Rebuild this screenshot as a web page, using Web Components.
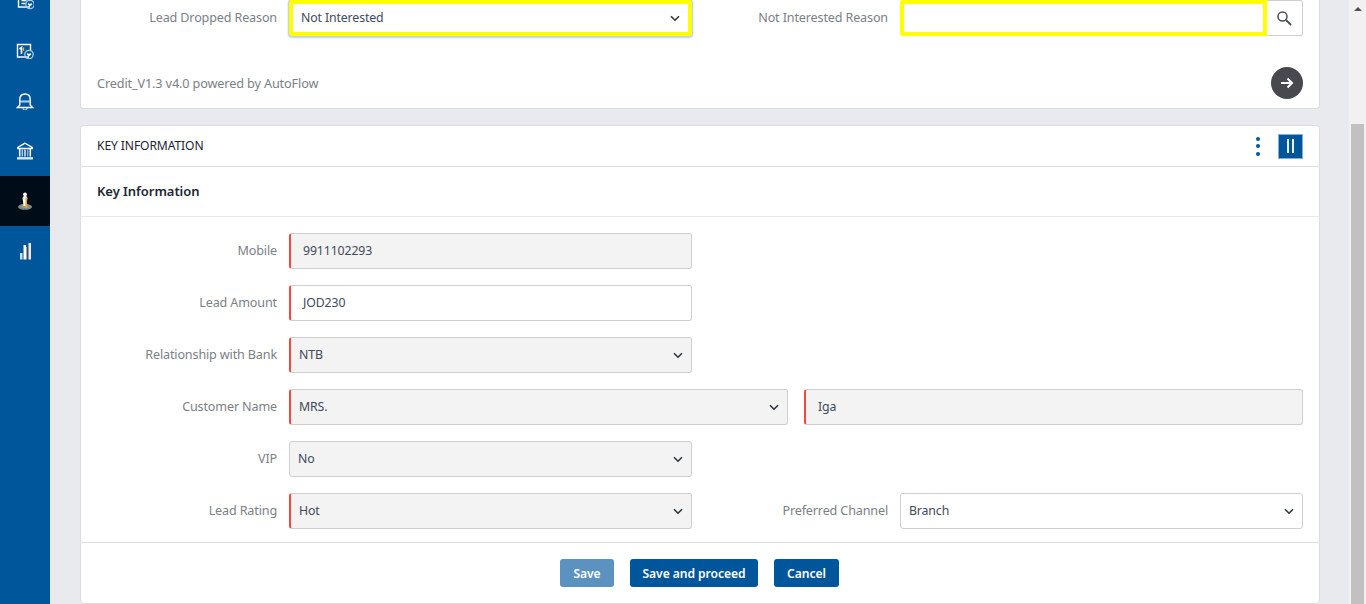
<!DOCTYPE html>
<html lang="en"><head><meta charset="utf-8"><title>Key Information</title>
<style>
html,body{margin:0;padding:0;height:604px;overflow:hidden;background:#e9eaee}
body{font:12.6px "Noto Sans","Liberation Sans",sans-serif;color:#3f4a5a}
</style></head><body>
<x-shell>
<x-sidebar slot="side"></x-sidebar>
<x-card flush>
  <x-grid>
    <x-field label="Lead Dropped Reason" kind="select" value="Not Interested" highlight></x-field>
    <x-field label="Not Interested Reason" kind="lookup" highlight></x-field>
  </x-grid>
  <x-powered>Credit_V1.3 v4.0 powered by AutoFlow</x-powered>
</x-card>
<x-card title="KEY INFORMATION" heading="Key Information">
  <x-grid>
    <x-field label="Mobile" value="9911102293" kind="input" disabled required></x-field><span></span>
    <x-field label="Lead Amount" value="JOD230" kind="input" required></x-field><span></span>
    <x-field label="Relationship with Bank" value="NTB" kind="select" disabled required></x-field><span></span>
    <x-name-field label="Customer Name" title-value="MRS." name-value="Iga"></x-name-field>
    <x-field label="VIP" value="No" kind="select" disabled></x-field><span></span>
    <x-field label="Lead Rating" value="Hot" kind="select" disabled required></x-field>
    <x-field label="Preferred Channel" value="Branch" kind="select"></x-field>
  </x-grid>
  <x-actions slot="footer"></x-actions>
</x-card>
</x-shell>
<script>
const CHEV='<svg width="10" height="7" viewBox="0 0 10 7" fill="none" stroke="#2f3640" stroke-width="1.6"><path d="M1 1.2l4 4 4-4"/></svg>';
function def(name,css,html,init){
  customElements.define(name,class extends HTMLElement{
    connectedCallback(){
      if(this.shadowRoot)return;
      const r=this.attachShadow({mode:'open'});
      r.innerHTML='<style>'+css+'</style>'+(typeof html==='function'?html(this):html);
      if(init)init(this,r);
    }
  });
}
def('x-shell',`:host{display:flex;height:604px;overflow:hidden}
.main{flex:1;min-width:0;display:flex;flex-direction:column;gap:16px;padding:0 29px 0 30px;height:604px;box-sizing:border-box}
.bar{width:17px;background:#f1f1f1;display:flex;flex-direction:column;align-items:center;flex:none}
.up{width:0;height:0;border:4px solid transparent;border-top:0;border-bottom:4px solid #505050;margin-top:7px;margin-left:1px}
.thumb{margin-top:113px;width:13px;height:480px;background:#c1c1c1;flex:none}`,
`<slot name="side"></slot><div class="main"><slot></slot></div><div class="bar"><div class="up"></div><div class="thumb"></div></div>`);

const W='#fff', L='#a9cbea';
const cal=(one)=>`<path d="M13 14H1.5V1.5H14.5V7"/>`+one+`<circle cx="13" cy="11.5" r="4.2" stroke="${L}" stroke-width="1.3"/><path d="M11.2 10.6l1.8 1.8 1.8-1.8" stroke-width="1.5"/>`;
const icons=[
`<svg width="18" height="20" viewBox="-1 -2 18 20" fill="none" stroke="${W}" stroke-width="1.4">${cal('<path d="M4.5 4.5h6.5M4.5 7.5h5M4.5 10.5h4" stroke-width="1.4"/>')}</svg>`,
`<svg width="18" height="16" viewBox="0 0 18 16" fill="none" stroke="${W}" stroke-width="1.4">${cal('<path d="M3.5 6L5.500 4.500V11" stroke-width="1.6"/><path d="M7.5 4.500v3.500" stroke="#f2b24a" stroke-width="1.4"/>')}</svg>`,
`<svg width="18" height="18" viewBox="0 -1 18 18" fill="none" stroke="${W}" stroke-width="1.4"><path d="M3.800 12V6.500C3.800 3 6 1 9 1s5.200 2 5.200 5.500V12l2.300 2.500H1.500z"/><path d="M4 8.500h10" stroke="${L}" stroke-width="2.200"/><path d="M7 15a2 2 0 0 0 4 0" stroke="${L}" stroke-width="1.200"/></svg>`,
`<svg width="18" height="18" viewBox="0 0 18 18" fill="none" stroke="${W}" stroke-width="1.4"><path d="M9 1.200L1.800 5.300v1.200h14.400V5.300z"/><path d="M3.700 7v7.500M14.300 7v7.500" stroke-width="1.500"/><path d="M6.300 7.500v7" stroke="${L}" stroke-width="1.500"/><path d="M9 7.500v7" stroke="#e9e2f0" stroke-width="1.500"/><path d="M11.700 7.500v7" stroke="#8fa8e0" stroke-width="1.500"/><path d="M1 16.300h16" stroke="#dbe9f5" stroke-width="2.400"/></svg>`,
`<svg width="16" height="18" viewBox="0 0 16 18"><ellipse cx="8" cy="14.800" rx="7" ry="3" fill="#7d8a8a"/><path d="M2.500 14.500h2M11.500 15.500h2" stroke="#6f93b5" stroke-width="1.200"/><ellipse cx="8" cy="14.600" rx="4" ry="1.400" fill="#b79a55"/><path d="M7 3.500h2l1.500 2.500-.5 3-.5 5h-3l-.5-5-.5-3z" fill="#fff"/><rect x="8.400" y="5.500" width="1.500" height="10.500" fill="#f0a21c"/><circle cx="8" cy="2.300" r="1.900" fill="#fff"/></svg>`,
`<svg width="14" height="18" viewBox="0 0 14 18"><rect x="2" y="11" width="2.500" height="6.500" fill="#bfe0f5"/><rect x="5.500" y="3" width="2.500" height="14.500" fill="#fff"/><rect x="8" y="5" width="1" height="12.500" fill="#d9954d"/><rect x="10.500" y="1" width="2.500" height="16.500" fill="#efe7f5"/></svg>`];
def('x-sidebar',`:host{display:block;width:50px;flex:none;background:#00569b;height:604px;overflow:hidden}
.list{margin-top:-24px;display:flex;flex-direction:column}
.i{height:50px;display:flex;align-items:center;justify-content:center}
.a{background:#000d18}`,
()=>'<div class="list">'+icons.map((s,i)=>`<div class="i${i==4?' a':''}">${s}</div>`).join('')+'</div>');

def('x-card',`:host{display:block;background:#fff;border:1px solid #dcdcdc;border-radius:4px;flex:none}
:host([flush]){border-top:0;border-radius:0 0 4px 4px}
.top{height:40px;display:flex;align-items:center;padding:0 16px;border-bottom:1px solid #dedede;font-size:12.1px;letter-spacing:-.1px;color:#1d2633}
.top span{flex:1;margin-top:-2px}
.dots{display:flex;flex-direction:column;gap:3.5px;margin-right:18px}
.dots i{width:4px;height:4px;border-radius:50%;background:#00569b}
.pause{width:25px;height:25px;background:#00569b;display:flex;gap:3px;justify-content:center;align-items:center;border:1px solid #7fb0d8;box-sizing:border-box}
.pause i{width:2px;height:14px;background:#e8f1f8}
.head{height:49px;display:flex;align-items:center;padding:0 16px;border-bottom:1px solid #e8e8e8;font-weight:600;font-size:13px;letter-spacing:-.05px;color:#1d2633}
.head span{margin-top:-2px}
.body{padding:16px 16px 13px}
:host([flush]) .body{padding:0 16px 0}
.foot{border-top:1px solid #dedede;height:60px;display:flex;align-items:center;justify-content:center}`,
h=>(h.getAttribute('title')?`<div class="top"><span>${h.getAttribute('title')}</span><div class="dots"><i></i><i></i><i></i></div><div class="pause"><i></i><i></i></div></div><div class="head"><span>${h.getAttribute('heading')}</span></div>`:'')+
`<div class="body"><slot></slot></div>`+(h.getAttribute('title')?`<div class="foot"><slot name="footer"></slot></div>`:''));

def('x-grid',`:host{display:grid;grid-template-columns:1fr 1fr;column-gap:16px;row-gap:16px}`,'<slot></slot>');

const fieldCss=`:host{display:grid;grid-template-columns:180px 1fr;column-gap:12px;align-items:center}
.l{text-align:right;color:#7b7f86;font-size:12.6px;letter-spacing:-.15px;white-space:nowrap;margin-top:-2px}
.f{height:36px;box-sizing:border-box;border:1px solid #cfcfcf;border-radius:3px;display:flex;align-items:center;justify-content:space-between;background:#fff;padding:0 8px 0 12px;font-size:12.3px;letter-spacing:-.12px;color:#3f4a5a;min-width:0}
.f span{margin-top:-1px}
.f.s{padding-left:8px}
.d{background:#f3f3f3}
.r{border-left:2px solid #f5483b}
.h{border:4px solid #ff0;border-radius:3px;box-shadow:0 0 0 1px #c4d3e4,0 1px 2px 1px #bcd0e6;padding-left:8px!important;padding-right:8px}`;
def('x-field',fieldCss+`.wrap{display:flex;min-width:0}.wrap .f{flex:1;box-shadow:none;border-radius:3px 0 0 3px}
.search{width:36px;height:36px;box-sizing:border-box;border:1px solid #cfcfcf;border-left:0;border-radius:0 3px 3px 0;display:flex;align-items:center;justify-content:center;padding-right:2px}`,
h=>{
 const k=h.getAttribute('kind'),v=h.getAttribute('value')||'';
 const cl=['f'];if(k==='select')cl.push('s');if(h.hasAttribute('disabled'))cl.push('d');if(h.hasAttribute('required'))cl.push('r');if(h.hasAttribute('highlight'))cl.push('h');
 let c;
 if(k==='lookup')c=`<div class="wrap"><div class="${cl.join(' ')}"></div><div class="search"><svg width="16" height="16" viewBox="0 0 16 16" fill="none" stroke="#4a5058" stroke-width="1.5"><circle cx="6.500" cy="6.500" r="4.500"/><path d="M10 10l5 5" stroke-width="1.800"/></svg></div></div>`;
 else c=`<div class="${cl.join(' ')}"><span>${v}</span>${k==='select'?CHEV:''}</div>`;
 return `<div class="l">${h.getAttribute('label')}</div>${c}`;
});
def('x-name-field',fieldCss+`:host{grid-column:1 / -1}.two{display:grid;grid-template-columns:1fr 1fr;gap:16px}`,
h=>`<div class="l">${h.getAttribute('label')}</div><div class="two"><div class="f s d r"><span>${h.getAttribute('title-value')}</span>${CHEV}</div><div class="f d r"><span>${h.getAttribute('name-value')}</span></div></div>`);

def('x-powered',`:host{display:flex;align-items:center;justify-content:space-between;margin-top:31px;height:32px;margin-bottom:9px;font-size:12.7px;letter-spacing:-.14px;color:#7b7f86}
.go{width:32px;height:32px;border-radius:50%;background:#47494e;display:flex;align-items:center;justify-content:center}`,
`<span><slot></slot></span><div class="go"><svg width="14" height="14" viewBox="0 0 14 14" fill="none" stroke="#fff" stroke-width="2"><path d="M1 7h11M7.500 2.500L12 7l-4.500 4.500"/></svg></div>`);

def('x-actions',`:host{display:flex;gap:16px;margin-right:1px}
button{font:600 12.1px "Noto Sans","Liberation Sans",sans-serif;letter-spacing:-.05px;height:28px;border:0;border-radius:3px;background:#00569b;color:#fff;padding:0}
.off{background:#5c92bf;width:54px}.p{width:128px}.c{width:65px}`,
`<button class="off">Save</button><button class="p">Save and proceed</button><button class="c">Cancel</button>`);
</script>
</body></html>
